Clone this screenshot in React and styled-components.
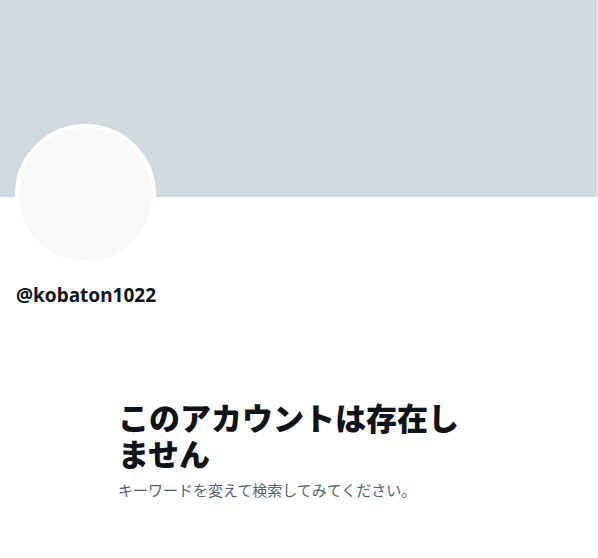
import React from "react";
import styled, { createGlobalStyle } from "styled-components";

const GlobalStyle = createGlobalStyle`
  body {
    margin: 0;
    background: #ffffff;
    font-family: "Noto Sans", "Noto Sans CJK JP", sans-serif;
  }
`;

const Column = styled.main`
  width: 597px;
  min-height: 558px;
  border-right: 1px solid #eff3f4;
  background: #ffffff;
`;

const Banner = styled.div`
  height: 197px;
  background: #cfd9de;
`;

const ProfileHeader = styled.section`
  padding: 0 15px;
`;

const Avatar = styled.div`
  width: 133px;
  height: 133px;
  margin-top: -73px;
  border: 4px solid #ffffff;
  border-radius: 50%;
  background: #f7f9f9;
`;

const Handle = styled.div`
  margin-top: 18px;
  padding-left: 1px;
  font-size: 19px;
  line-height: 24px;
  font-weight: 700;
  color: #0f1419;
`;

const EmptyState = styled.section`
  width: 361px;
  margin: 93px auto 0;
`;

const Title = styled.h2`
  margin: 0;
  font-size: 31px;
  line-height: 36px;
  font-weight: 800;
  color: #0f1419;
`;

const Subtitle = styled.p`
  margin: 8px 0 0;
  font-size: 15px;
  line-height: 20px;
  color: #536471;
`;

export default function App() {
  return (
    <>
      <GlobalStyle />
      <Column>
        <Banner />
        <ProfileHeader>
          <Avatar />
          <Handle>@kobaton1022</Handle>
        </ProfileHeader>
        <EmptyState>
          <Title>このアカウントは存在しません</Title>
          <Subtitle>キーワードを変えて検索してみてください。</Subtitle>
        </EmptyState>
      </Column>
    </>
  );
}
